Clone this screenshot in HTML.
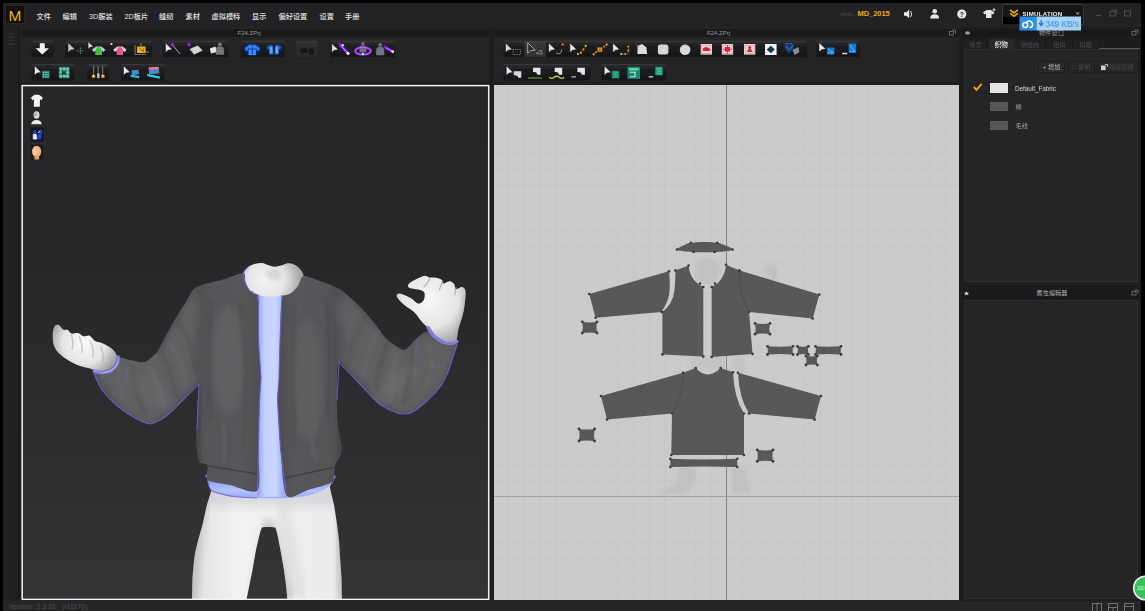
<!DOCTYPE html>
<html lang="zh">
<head>
<meta charset="utf-8">
<title>Marvelous Designer</title>
<style>
*{box-sizing:border-box;margin:0;padding:0}
html,body{width:1145px;height:611px;overflow:hidden;background:#000}
body{position:relative;font-family:"Liberation Sans","Noto Sans CJK SC",sans-serif;color:#ddd}
.abs{position:absolute}
#app{position:absolute;left:3px;top:3px;width:1138px;height:608px;background:#242426}
#menubar{position:absolute;left:3px;top:3px;width:1138px;height:23px;background:#222224}
.mi{position:absolute;top:12px;font-size:7.2px;line-height:10px;color:#e4e4e4;white-space:nowrap;font-weight:500}
#logo{position:absolute;left:5px;top:5px;width:20px;height:19px;background:#15100a;border:1px solid #2a2622}
#logo span{position:absolute;left:0;top:1.2px;width:18px;text-align:center;font-size:15.5px;line-height:18px;color:#e8b030;font-weight:400}
.phead{position:absolute;height:8px;background:#1b1b1d;border-radius:1px}
.ptitle{position:absolute;font-size:6px;line-height:8px;color:#9a9a9a;white-space:nowrap}
.vp3d{position:absolute;left:22px;top:85px;width:467px;height:515px;background:linear-gradient(#262629,#28282b 40%,#343437)}
.vp2d{position:absolute;left:494px;top:85px;width:465px;height:515px;background:#cbcbcb}
.tb{position:absolute;height:17px;background:#1c1c1e;border-top:1px solid #3a3a3c;border-radius:1px}
</style>
</head>
<body>
<div id="app"></div>
<div id="menubar"></div>
<div id="logo"><span>M</span></div>
<span class="mi" style="left:36.5px">文件</span>
<span class="mi" style="left:62.5px">编辑</span>
<span class="mi" style="left:89px">3D服装</span>
<span class="mi" style="left:124.5px">2D板片</span>
<span class="mi" style="left:159px">缝纫</span>
<span class="mi" style="left:185.5px">素材</span>
<span class="mi" style="left:211.5px">虚拟模特</span>
<span class="mi" style="left:252px">显示</span>
<span class="mi" style="left:278.5px">偏好设置</span>
<span class="mi" style="left:319.5px">设置</span>
<span class="mi" style="left:345px">手册</span>

<!-- left gutter -->
<div class="abs" style="left:3px;top:26px;width:15px;height:585px;background:#202022"></div>
<div class="abs" style="left:18px;top:26px;width:2px;height:575px;background:#1a1a1c"></div>

<div class="abs" style="left:8px;top:33px;width:7px;height:14px;background:repeating-linear-gradient(#2c2c2e 0 1.5px,#202022 1.5px 3.5px)"></div>
<div class="abs" style="left:20px;top:82px;width:940px;height:3px;background:#1e1e20"></div>
<div class="abs" style="left:489px;top:27px;width:5px;height:574px;background:#1d1d1f"></div>
<div class="abs" style="left:959px;top:27px;width:3px;height:574px;background:#1d1d1f"></div>
<!-- 3D panel header -->
<div class="phead" style="left:21px;top:29px;width:468px"></div>
<span class="ptitle" style="left:237.5px;top:29px">F24.ZPrj</span>
<!-- 2D panel header -->
<div class="phead" style="left:493px;top:29px;width:466px"></div>
<span class="ptitle" style="left:707px;top:29px">F24.ZPrj</span>

<div class="vp3d" id="vp3d"></div>
<svg class="abs" style="left:23px;top:86px" width="465" height="513" viewBox="23 86 465 513">
<defs>
<linearGradient id="gLL" gradientUnits="userSpaceOnUse" x1="192" y1="0" x2="268" y2="0">
<stop offset="0" stop-color="#a8a8a8"/><stop offset=".14" stop-color="#dedede"/><stop offset=".45" stop-color="#f3f3f3"/><stop offset=".8" stop-color="#e2e2e2"/><stop offset="1" stop-color="#b4b4b4"/></linearGradient>
<linearGradient id="gRL" gradientUnits="userSpaceOnUse" x1="262" y1="0" x2="343" y2="0">
<stop offset="0" stop-color="#9c9c9c"/><stop offset=".25" stop-color="#c9c9c9"/><stop offset=".6" stop-color="#ececec"/><stop offset=".88" stop-color="#f0f0f0"/><stop offset="1" stop-color="#bdbdbd"/></linearGradient>
<linearGradient id="gLegs" gradientUnits="userSpaceOnUse" x1="192" y1="0" x2="343" y2="0">
<stop offset="0" stop-color="#c9c9c9"/><stop offset=".08" stop-color="#e6e6e6"/><stop offset=".3" stop-color="#f2f2f2"/><stop offset=".7" stop-color="#efefef"/><stop offset=".93" stop-color="#ececec"/><stop offset="1" stop-color="#cfcfcf"/></linearGradient>
<linearGradient id="gStrip" gradientUnits="userSpaceOnUse" x1="258" y1="0" x2="283" y2="0">
<stop offset="0" stop-color="#94a2f4"/><stop offset=".25" stop-color="#c2d0ff"/><stop offset=".7" stop-color="#c9d6ff"/><stop offset="1" stop-color="#a2aff6"/></linearGradient>
<linearGradient id="gHem" gradientUnits="userSpaceOnUse" x1="0" y1="478" x2="0" y2="499">
<stop offset="0" stop-color="#8a98f0"/><stop offset=".6" stop-color="#b4c2ff"/><stop offset="1" stop-color="#98a4f2"/></linearGradient>
<radialGradient id="gNeck" gradientUnits="userSpaceOnUse" cx="266" cy="280" r="34">
<stop offset="0" stop-color="#f4f4f4"/><stop offset=".55" stop-color="#e6e6e6"/><stop offset="1" stop-color="#a9a9a9"/></radialGradient>
<radialGradient id="gHandL" gradientUnits="userSpaceOnUse" cx="84" cy="343" r="36">
<stop offset="0" stop-color="#fafafa"/><stop offset=".6" stop-color="#e4e4e4"/><stop offset="1" stop-color="#9c9c9c"/></radialGradient>
<radialGradient id="gHandR" gradientUnits="userSpaceOnUse" cx="430" cy="300" r="46">
<stop offset="0" stop-color="#f8f8f8"/><stop offset=".6" stop-color="#e6e6e6"/><stop offset="1" stop-color="#a6a6a6"/></radialGradient>
<linearGradient id="gJL" gradientUnits="userSpaceOnUse" x1="190" y1="0" x2="262" y2="0">
<stop offset="0" stop-color="#4c4c4f"/><stop offset=".25" stop-color="#555558"/><stop offset=".7" stop-color="#58585b"/><stop offset="1" stop-color="#4e4e51"/></linearGradient>
<linearGradient id="gJR" gradientUnits="userSpaceOnUse" x1="276" y1="0" x2="345" y2="0">
<stop offset="0" stop-color="#4c4c4f"/><stop offset=".3" stop-color="#58585b"/><stop offset=".75" stop-color="#555558"/><stop offset="1" stop-color="#4a4a4d"/></linearGradient>
<filter id="b2" x="-20%" y="-20%" width="140%" height="140%"><feGaussianBlur stdDeviation="2.2"/></filter>
<filter id="b4" x="-30%" y="-30%" width="160%" height="160%"><feGaussianBlur stdDeviation="4"/></filter>
<filter id="b1" x="-10%" y="-10%" width="120%" height="120%"><feGaussianBlur stdDeviation="0.6"/></filter>
<clipPath id="cJL"><path id="pJL" d="M243.5,273.0 C240.8,272.5 230.1,277.5 225.0,279.0 C219.9,280.5 209.2,282.7 205.0,284.0 C200.8,285.3 195.9,286.9 193.5,289.0 C191.1,291.1 189.6,295.7 187.0,300.0 C184.4,304.3 177.2,315.5 174.0,321.0 C170.8,326.5 165.3,336.9 163.0,341.0 C160.7,345.1 159.4,349.2 157.0,352.0 C154.6,354.8 148.6,360.9 145.0,362.0 C141.4,363.1 133.5,360.6 130.0,360.0 C126.5,359.4 120.9,356.8 118.6,357.6 C116.3,358.4 114.9,364.2 113.0,366.0 C111.1,367.8 106.6,370.2 104.0,371.0 C101.4,371.8 93.9,369.7 93.5,372.0 C93.1,374.3 98.3,384.1 100.8,388.0 C103.3,391.9 108.9,397.9 112.0,401.0 C115.1,404.1 120.7,408.6 124.0,411.0 C127.3,413.4 133.7,417.3 137.0,419.0 C140.3,420.7 145.9,423.6 149.0,423.7 C152.1,423.8 157.2,421.4 160.0,420.0 C162.8,418.6 166.7,415.9 170.0,413.0 C173.3,410.1 181.1,401.9 185.0,398.0 C188.9,394.1 197.3,383.1 199.0,384.0 C200.7,384.9 197.8,399.4 197.5,405.0 C197.2,410.6 197.2,422.3 197.0,426.0 C196.8,429.7 196.0,429.8 196.0,433.0 C196.0,436.2 196.5,446.1 197.0,450.0 C197.5,453.9 198.1,459.9 199.5,462.0 C200.9,464.1 206.5,463.1 207.6,465.5 C208.7,467.9 204.6,477.4 207.6,480.0 C210.6,482.6 223.3,483.6 230.0,485.0 C236.7,486.4 253.7,495.2 257.5,490.5 C261.3,485.8 258.2,462.1 258.5,450.0 C258.8,437.9 259.2,409.6 259.5,400.0 C259.8,390.4 261.1,386.0 261.0,378.0 C260.9,370.0 258.8,351.1 258.5,340.0 C258.2,328.9 259.6,301.5 258.5,295.0 C257.4,288.5 251.7,292.6 250.0,291.0 C248.3,289.4 246.4,285.4 245.5,283.0 C244.6,280.6 246.2,273.5 243.5,273.0Z"/></clipPath>
<clipPath id="cJR"><path id="pJR" d="M303.6,276.0 C306.5,275.3 315.3,279.3 320.0,281.0 C324.7,282.7 334.6,286.3 339.0,288.8 C343.4,291.3 349.5,296.9 353.0,300.0 C356.5,303.1 361.9,308.7 365.0,312.0 C368.1,315.3 373.2,321.5 376.0,325.0 C378.8,328.5 383.3,335.7 386.0,338.5 C388.7,341.3 393.5,344.5 396.0,346.0 C398.5,347.5 402.3,350.7 404.7,350.0 C407.1,349.3 411.6,343.3 414.0,341.0 C416.4,338.7 420.9,334.2 423.0,333.0 C425.1,331.8 427.7,331.1 430.0,332.0 C432.3,332.9 436.4,338.4 440.0,340.0 C443.6,341.6 455.3,341.5 457.0,343.8 C458.7,346.1 454.2,353.2 453.0,357.0 C451.8,360.8 449.6,368.2 448.0,372.0 C446.4,375.8 443.7,381.9 441.0,385.6 C438.3,389.3 431.8,396.5 428.0,400.0 C424.2,403.5 415.7,410.1 412.5,412.0 C409.3,413.9 406.1,413.9 404.0,414.0 C401.9,414.1 399.4,413.8 397.0,413.0 C394.6,412.2 388.8,409.6 386.0,408.0 C383.2,406.4 379.9,404.6 376.0,401.0 C372.1,397.4 361.9,386.2 357.0,381.0 C352.1,375.8 341.7,360.7 339.0,362.0 C336.3,363.3 337.2,383.3 337.0,391.0 C336.8,398.7 336.9,412.3 337.5,420.0 C338.1,427.7 341.7,443.7 341.8,449.0 C341.9,454.3 338.9,457.8 338.0,460.0 C337.1,462.2 335.6,462.8 335.0,465.5 C334.4,468.2 334.4,477.6 333.7,480.0 C333.0,482.4 333.4,482.2 330.0,483.5 C326.6,484.8 313.8,488.4 308.0,490.0 C302.2,491.6 290.2,501.0 286.5,495.5 C282.8,490.0 281.7,461.7 280.5,449.0 C279.3,436.3 277.7,409.5 277.5,400.0 C277.3,390.5 278.7,386.0 279.0,378.0 C279.3,370.0 279.6,351.1 280.0,340.0 C280.4,328.9 280.7,301.1 282.0,295.0 C283.3,288.9 287.9,295.2 290.0,294.0 C292.1,292.8 296.2,288.4 298.0,286.0 C299.8,283.6 300.7,276.7 303.6,276.0Z"/></clipPath>
</defs>
<g filter="url(#b1)">
<clipPath id="cLeg"><path id="pLeg" d="M215.0,468.0 C201.6,470.3 212.9,483.7 212.0,488.0 C211.1,492.3 208.1,500.8 207.0,505.0 C205.9,509.2 203.8,519.8 202.7,524.0 C201.6,528.2 199.0,537.1 198.0,541.0 C197.0,544.9 195.1,552.7 194.5,557.0 C193.9,561.3 192.8,573.0 192.5,578.0 C192.2,583.0 192.1,595.7 192.0,600.0 C191.9,604.3 185.6,613.2 191.8,615.0 C198.0,616.8 238.6,616.8 245.0,615.0 C251.4,613.2 246.0,603.5 246.5,600.0 C247.0,596.5 248.8,588.5 249.5,585.0 C250.2,581.5 251.7,574.1 252.5,570.0 C253.3,565.9 255.1,554.3 256.0,550.0 C256.9,545.7 259.4,535.5 260.0,533.0 C260.6,530.5 261.2,529.2 261.5,528.5 C261.8,527.8 261.7,527.5 262.5,527.3 C263.3,527.1 266.6,527.0 268.0,527.0 C269.4,527.0 273.6,527.1 274.5,527.3 C275.4,527.5 275.4,527.8 275.7,528.5 C276.0,529.2 276.4,530.5 277.0,533.0 C277.6,535.5 279.7,545.7 280.5,550.0 C281.3,554.3 283.4,565.9 284.0,570.0 C284.6,574.1 285.6,581.5 286.0,585.0 C286.4,588.5 287.2,596.5 287.5,600.0 C287.8,603.5 282.1,613.2 288.5,615.0 C294.9,616.8 336.0,616.8 342.2,615.0 C348.4,613.2 342.1,604.3 342.0,600.0 C341.9,595.7 341.7,583.0 341.5,578.0 C341.3,573.0 340.3,561.3 340.0,557.0 C339.7,552.7 339.4,544.9 339.0,541.0 C338.6,537.1 337.6,528.2 337.0,524.0 C336.4,519.8 334.8,509.2 334.0,505.0 C333.2,500.8 330.8,492.3 330.0,488.0 C329.2,483.7 340.4,470.3 327.0,468.0 C313.6,465.7 228.4,465.7 215.0,468.0Z"/></clipPath>
<use href="#pLeg" fill="url(#gLegs)"/>
<g clip-path="url(#cLeg)">
<path d="M268,522 L252,600" stroke="#b0b0b0" stroke-width="7" opacity=".45" filter="url(#b4)"/>
<path d="M268,522 L288,600" stroke="#a0a0a0" stroke-width="12" opacity=".5" filter="url(#b4)"/>
<path d="M282,505 L300,600" stroke="#c5c5c5" stroke-width="12" opacity=".35" filter="url(#b4)"/>
<path d="M205,500 L190,600" stroke="#a5a5a5" stroke-width="7" opacity=".45" filter="url(#b4)"/>
<path d="M338,500 L344,600" stroke="#9a9a9a" stroke-width="6" opacity=".5" filter="url(#b4)"/>
<rect x="190" y="484" width="160" height="22" fill="#b0b0bc" opacity=".35" filter="url(#b4)"/>
</g>
<path d="M214.0,474.0 C198.2,474.7 208.2,476.9 207.8,479.0 C207.4,481.1 209.1,488.0 211.0,490.0 C212.9,492.0 218.7,493.1 222.0,494.0 C225.3,494.9 230.4,496.3 235.5,496.8 C240.6,497.3 253.5,497.8 260.0,498.0 C266.5,498.2 279.0,498.4 284.6,498.2 C290.2,498.0 297.7,497.2 302.0,496.5 C306.3,495.8 313.7,494.1 317.0,493.0 C320.3,491.9 324.8,489.7 327.0,488.0 C329.2,486.3 333.6,482.4 333.5,480.5 C333.4,478.6 341.9,474.9 326.0,474.0 C310.1,473.1 229.8,473.3 214.0,474.0Z" fill="url(#gHem)"/>
<path d="M257.5,291.0 L282.5,291.0 L280.0,340.0 L279.0,378.0 L277.5,400.0 L280.5,449.0 L287.0,497.0 L257.0,497.0 L259.5,400.0 L261.0,378.0 L258.5,340.0Z" fill="url(#gStrip)"/>
<path d="M255.4,263.8 C257.7,263.1 259.9,262.8 262.0,263.0 C264.1,263.2 266.0,264.4 268.0,265.0 C270.0,265.6 271.8,266.7 274.0,266.8 C276.2,266.9 278.7,266.1 281.0,265.5 C283.3,264.9 285.8,263.5 288.0,263.3 C290.2,263.1 292.0,263.6 294.0,264.5 C296.0,265.4 298.4,267.1 300.0,269.0 C301.6,270.9 303.4,273.5 303.6,276.0 C303.8,278.5 302.3,281.7 301.0,284.0 C299.7,286.3 297.8,288.3 296.0,290.0 C294.2,291.7 292.5,293.0 290.0,294.0 C287.5,295.0 284.2,295.6 281.0,296.0 C277.8,296.4 274.5,296.6 271.0,296.5 C267.5,296.4 263.5,296.4 260.0,295.5 C256.5,294.6 252.4,293.1 250.0,291.0 C247.6,288.9 246.6,286.0 245.5,283.0 C244.4,280.0 243.1,275.7 243.5,273.0 C243.9,270.3 246.0,268.5 248.0,267.0 C250.0,265.5 253.1,264.5 255.4,263.8Z" fill="url(#gNeck)"/>
<ellipse cx="274" cy="274" rx="8" ry="6" fill="#c9c9c9" opacity=".6" filter="url(#b2)"/>
<use href="#pJL" fill="url(#gJL)"/>
<use href="#pJR" fill="url(#gJR)"/>
<g clip-path="url(#cJL)">
<path d="M196,286 L160,350 L118,356 L92,372 L124,413 L150,426 L196,386Z" fill="#68686b" opacity=".75" filter="url(#b4)"/>
<ellipse cx="228" cy="360" rx="16" ry="55" fill="#6a6a6d" opacity=".55" filter="url(#b4)"/>
<ellipse cx="150" cy="392" rx="30" ry="12" transform="rotate(35 150 392)" fill="#68686b" opacity=".7" filter="url(#b4)"/>
<ellipse cx="182" cy="335" rx="10" ry="40" transform="rotate(22 182 335)" fill="#626265" opacity=".6" filter="url(#b4)"/>
<path d="M200,384 L197,440 L199,462" stroke="#3e3e41" stroke-width="5" fill="none" opacity=".6" filter="url(#b2)"/>
<path d="M212.0,300.0 C211.3,310.0 208.0,340.0 208.0,360.0 C208.0,380.0 211.3,410.0 212.0,420.0" stroke="#434346" stroke-width="3" fill="none" opacity="0.45" filter="url(#b2)"/>
<path d="M240.0,300.0 C241.0,311.7 245.5,345.0 246.0,370.0 C246.5,395.0 243.5,436.7 243.0,450.0" stroke="#454548" stroke-width="3" fill="none" opacity="0.4" filter="url(#b2)"/>
<path d="M222.0,420.0 C222.7,424.2 226.0,438.0 226.0,445.0 C226.0,452.0 222.7,459.2 222.0,462.0" stroke="#737376" stroke-width="3" fill="none" opacity="0.4" filter="url(#b2)"/>
<path d="M200,464.5 L257,474" stroke="#3c3c3f" stroke-width="1.6" fill="none" opacity=".8"/>
<path d="M149.0,365.0 C150.5,368.3 155.7,377.8 158.0,385.0 C160.3,392.2 162.2,404.2 163.0,408.0" stroke="#7a7a7d" stroke-width="3" fill="none" opacity="0.5" filter="url(#b2)"/>
<path d="M160.0,352.0 C161.7,355.3 167.3,364.3 170.0,372.0 C172.7,379.7 175.0,393.7 176.0,398.0" stroke="#404043" stroke-width="2.5" fill="none" opacity="0.5" filter="url(#b2)"/>
<path d="M168.0,340.0 C170.0,343.3 177.0,352.0 180.0,360.0 C183.0,368.0 185.0,383.3 186.0,388.0" stroke="#767679" stroke-width="3" fill="none" opacity="0.45" filter="url(#b2)"/>
<path d="M132.0,366.0 C132.7,370.0 133.7,381.8 136.0,390.0 C138.3,398.2 144.3,410.8 146.0,415.0" stroke="#404043" stroke-width="2.5" fill="none" opacity="0.45" filter="url(#b2)"/>
<path d="M176.0,318.0 C178.3,322.5 186.7,336.0 190.0,345.0 C193.3,354.0 195.0,367.5 196.0,372.0" stroke="#404043" stroke-width="2.5" fill="none" opacity="0.4" filter="url(#b2)"/>
<path d="M122.0,364.0 C121.3,366.7 117.7,373.7 118.0,380.0 C118.3,386.3 123.0,398.3 124.0,402.0" stroke="#77777a" stroke-width="2.5" fill="none" opacity="0.4" filter="url(#b2)"/>
<path d="M126.0,362.0 C126.2,364.0 127.8,369.7 127.0,374.0 C126.2,378.3 123.5,384.7 121.0,388.0 C118.5,391.3 113.5,393.0 112.0,394.0" stroke="#6e6ab8" stroke-width="1" fill="none" opacity=".55"/>
</g>
<g clip-path="url(#cJR)">
<path d="M342,288 L386,336 L405,348 L423,331 L459,343 L442,388 L413,414 L396,415 L342,364Z" fill="#68686b" opacity=".75" filter="url(#b4)"/>
<ellipse cx="308" cy="380" rx="15" ry="60" fill="#68686b" opacity=".5" filter="url(#b4)"/>
<ellipse cx="395" cy="385" rx="32" ry="12" transform="rotate(-38 395 385)" fill="#6a6a6d" opacity=".7" filter="url(#b4)"/>
<ellipse cx="356" cy="330" rx="10" ry="36" transform="rotate(-35 356 330)" fill="#626265" opacity=".6" filter="url(#b4)"/>
<path d="M339,362 L338,420 L341,455" stroke="#3e3e41" stroke-width="5" fill="none" opacity=".6" filter="url(#b2)"/>
<path d="M326.0,300.0 C326.7,310.0 330.0,340.0 330.0,360.0 C330.0,380.0 326.7,410.0 326.0,420.0" stroke="#434346" stroke-width="3" fill="none" opacity="0.45" filter="url(#b2)"/>
<path d="M296.0,300.0 C295.3,311.7 292.0,345.0 292.0,370.0 C292.0,395.0 295.3,436.7 296.0,450.0" stroke="#454548" stroke-width="3" fill="none" opacity="0.4" filter="url(#b2)"/>
<path d="M316.0,420.0 C315.3,424.2 311.7,438.0 312.0,445.0 C312.3,452.0 317.0,459.2 318.0,462.0" stroke="#737376" stroke-width="3" fill="none" opacity="0.4" filter="url(#b2)"/>
<path d="M285,478 L340,466" stroke="#3c3c3f" stroke-width="1.6" fill="none" opacity=".8"/>
<path d="M398.0,352.0 C397.0,355.8 393.3,366.7 392.0,375.0 C390.7,383.3 390.3,397.5 390.0,402.0" stroke="#7a7a7d" stroke-width="3" fill="none" opacity="0.5" filter="url(#b2)"/>
<path d="M388.0,342.0 C386.7,346.0 382.0,357.7 380.0,366.0 C378.0,374.3 376.7,387.7 376.0,392.0" stroke="#404043" stroke-width="2.5" fill="none" opacity="0.5" filter="url(#b2)"/>
<path d="M378.0,330.0 C376.3,334.0 370.7,345.7 368.0,354.0 C365.3,362.3 363.0,375.7 362.0,380.0" stroke="#767679" stroke-width="3" fill="none" opacity="0.45" filter="url(#b2)"/>
<path d="M412.0,346.0 C411.7,350.3 411.3,362.7 410.0,372.0 C408.7,381.3 405.0,397.0 404.0,402.0" stroke="#404043" stroke-width="2.5" fill="none" opacity="0.45" filter="url(#b2)"/>
<path d="M366.0,316.0 C364.0,320.0 357.0,332.0 354.0,340.0 C351.0,348.0 349.0,360.0 348.0,364.0" stroke="#404043" stroke-width="2.5" fill="none" opacity="0.4" filter="url(#b2)"/>
<path d="M428.0,344.0 C428.7,347.7 432.7,358.0 432.0,366.0 C431.3,374.0 425.3,387.7 424.0,392.0" stroke="#77777a" stroke-width="2.5" fill="none" opacity="0.4" filter="url(#b2)"/>
<path d="M419.0,338.0 C418.7,340.3 415.5,347.7 417.0,352.0 C418.5,356.3 423.2,361.3 428.0,364.0 C432.8,366.7 443.0,367.3 446.0,368.0" stroke="#6e6ab8" stroke-width="1" fill="none" opacity=".55"/>
</g>
<clipPath id="cNB"><path d="M253,300 L253,288 L262,282 L280,282 L289,287 L289,300Z"/></clipPath>
<g clip-path="url(#cNB)"><path d="M257.5,291.0 L282.5,291.0 L280.0,340.0 L279.0,378.0 L277.5,400.0 L280.5,449.0 L287.0,497.0 L257.0,497.0 L259.5,400.0 L261.0,378.0 L258.5,340.0Z" fill="url(#gStrip)"/><path d="M255.4,263.8 C257.7,263.1 259.9,262.8 262.0,263.0 C264.1,263.2 266.0,264.4 268.0,265.0 C270.0,265.6 271.8,266.7 274.0,266.8 C276.2,266.9 278.7,266.1 281.0,265.5 C283.3,264.9 285.8,263.5 288.0,263.3 C290.2,263.1 292.0,263.6 294.0,264.5 C296.0,265.4 298.4,267.1 300.0,269.0 C301.6,270.9 303.4,273.5 303.6,276.0 C303.8,278.5 302.3,281.7 301.0,284.0 C299.7,286.3 297.8,288.3 296.0,290.0 C294.2,291.7 292.5,293.0 290.0,294.0 C287.5,295.0 284.2,295.6 281.0,296.0 C277.8,296.4 274.5,296.6 271.0,296.5 C267.5,296.4 263.5,296.4 260.0,295.5 C256.5,294.6 252.4,293.1 250.0,291.0 C247.6,288.9 246.6,286.0 245.5,283.0 C244.4,280.0 243.1,275.7 243.5,273.0 C243.9,270.3 246.0,268.5 248.0,267.0 C250.0,265.5 253.1,264.5 255.4,263.8Z" fill="url(#gNeck)"/></g>
<path d="M53.0,331.0 C53.4,329.0 54.1,326.6 55.1,325.6 C56.1,324.7 57.5,324.5 58.8,325.1 C60.2,325.7 61.6,328.6 63.1,329.4 C64.6,330.2 66.5,329.2 67.9,329.9 C69.3,330.6 69.9,333.1 71.6,333.6 C73.3,334.1 76.0,332.6 78.0,333.1 C79.9,333.5 81.3,335.8 83.3,336.3 C85.2,336.7 87.7,334.9 89.7,335.7 C91.6,336.5 92.9,339.8 95.0,341.1 C97.1,342.3 99.8,342.0 102.4,343.2 C105.1,344.3 108.7,346.3 111.0,348.0 C113.2,349.7 114.6,351.3 115.7,353.3 C116.9,355.2 118.0,357.6 117.9,359.7 C117.8,361.8 116.7,364.1 115.2,366.1 C113.7,368.0 111.3,370.3 108.8,371.4 C106.3,372.4 103.3,372.9 100.3,372.4 C97.3,372.0 94.1,369.8 90.7,368.7 C87.4,367.7 83.7,367.4 80.1,366.1 C76.5,364.7 72.4,362.8 68.9,360.7 C65.5,358.7 61.8,356.3 59.4,353.8 C56.9,351.3 55.2,348.6 54.0,345.9 C52.9,343.1 52.8,339.8 52.7,337.3 C52.5,334.9 52.6,332.9 53.0,331.0Z" fill="url(#gHandL)"/>
<path d="M71,334 Q74,342 72,350 M79,336 Q83,344 82,353 M90,341 Q94,348 93,357 M101,347 Q104,354 103,362" stroke="#b5b5b5" stroke-width="1.5" fill="none" opacity=".7" filter="url(#b1)"/>
<clipPath id="cRH"><path d="M396.8,296.7 C395.9,294.7 397.4,293.2 399.7,293.4 C402.1,293.7 407.7,296.4 410.8,298.1 C413.8,299.8 416.0,303.2 418.1,303.6 C420.3,304.0 422.5,302.1 423.6,300.3 C424.6,298.6 425.0,294.7 424.5,293.0 C423.9,291.3 422.5,290.8 420.3,290.0 C418.2,289.3 413.5,289.1 411.5,288.6 C409.5,288.0 408.5,287.8 408.3,286.8 C408.0,285.8 407.5,284.5 410.0,282.7 C412.6,280.9 420.4,276.9 423.6,276.0 C426.8,275.2 427.4,277.3 429.2,277.5 C431.0,277.8 432.3,277.2 434.3,277.5 C436.4,277.9 440.2,278.7 441.7,279.7 C443.2,280.7 441.8,283.2 443.2,283.4 C444.5,283.7 448.0,281.1 449.8,281.2 C451.6,281.3 453.2,282.8 454.2,284.1 C455.2,285.5 454.5,288.8 455.7,289.3 C456.9,289.8 460.0,287.0 461.6,287.1 C463.2,287.2 464.7,288.1 465.3,290.0 C465.9,292.0 465.6,294.9 465.3,298.9 C464.9,302.8 464.2,308.7 463.1,313.6 C462.0,318.5 459.9,323.7 458.6,328.3 C457.4,333.0 457.7,339.3 455.7,341.6 C453.7,343.9 450.5,343.5 446.9,342.3 C443.2,341.1 436.8,336.7 433.6,334.2 C430.4,331.8 429.6,329.6 427.7,327.6 C425.8,325.6 424.3,324.7 422.1,322.1 C419.9,319.6 417.3,315.2 414.5,312.4 C411.6,309.6 407.8,308.1 404.9,305.5 C401.9,302.9 397.6,298.7 396.8,296.7Z"/></clipPath>
<path d="M396.8,296.7 C395.9,294.7 397.4,293.2 399.7,293.4 C402.1,293.7 407.7,296.4 410.8,298.1 C413.8,299.8 416.0,303.2 418.1,303.6 C420.3,304.0 422.5,302.1 423.6,300.3 C424.6,298.6 425.0,294.7 424.5,293.0 C423.9,291.3 422.5,290.8 420.3,290.0 C418.2,289.3 413.5,289.1 411.5,288.6 C409.5,288.0 408.5,287.8 408.3,286.8 C408.0,285.8 407.5,284.5 410.0,282.7 C412.6,280.9 420.4,276.9 423.6,276.0 C426.8,275.2 427.4,277.3 429.2,277.5 C431.0,277.8 432.3,277.2 434.3,277.5 C436.4,277.9 440.2,278.7 441.7,279.7 C443.2,280.7 441.8,283.2 443.2,283.4 C444.5,283.7 448.0,281.1 449.8,281.2 C451.6,281.3 453.2,282.8 454.2,284.1 C455.2,285.5 454.5,288.8 455.7,289.3 C456.9,289.8 460.0,287.0 461.6,287.1 C463.2,287.2 464.7,288.1 465.3,290.0 C465.9,292.0 465.6,294.9 465.3,298.9 C464.9,302.8 464.2,308.7 463.1,313.6 C462.0,318.5 459.9,323.7 458.6,328.3 C457.4,333.0 457.7,339.3 455.7,341.6 C453.7,343.9 450.5,343.5 446.9,342.3 C443.2,341.1 436.8,336.7 433.6,334.2 C430.4,331.8 429.6,329.6 427.7,327.6 C425.8,325.6 424.3,324.7 422.1,322.1 C419.9,319.6 417.3,315.2 414.5,312.4 C411.6,309.6 407.8,308.1 404.9,305.5 C401.9,302.9 397.6,298.7 396.8,296.7Z" fill="url(#gHandR)"/>
<path d="M429.9,278.5 C429.4,279.4 428.0,282.0 427.0,283.4 C425.9,284.8 424.2,286.5 423.6,287.1" stroke="#a8a8a8" stroke-width="1.3" fill="none" opacity=".8" filter="url(#b1)"/>
<path d="M442.7,280.9 C442.4,281.7 441.6,284.0 441.0,285.6 C440.4,287.2 439.5,289.5 439.2,290.3" stroke="#a8a8a8" stroke-width="1.3" fill="none" opacity=".8" filter="url(#b1)"/>
<path d="M456.0,287.1 C455.9,287.8 455.6,290.2 455.4,291.5 C455.2,292.9 454.9,294.6 454.8,295.2" stroke="#a8a8a8" stroke-width="1.3" fill="none" opacity=".8" filter="url(#b1)"/>
<g clip-path="url(#cRH)"><path d="M466.0,294.5 C465.8,297.4 465.5,306.5 464.5,312.1 C463.5,317.8 461.3,323.5 460.1,328.3 C458.9,333.1 457.7,338.8 457.2,340.8" stroke="#a0a0a0" stroke-width="4" fill="none" opacity=".6" filter="url(#b2)"/></g>
<path d="M118.2,357.0 C118.0,358.2 118.2,361.8 117.0,364.0 C115.8,366.2 113.5,369.1 111.0,370.5 C108.5,371.9 104.8,372.4 102.0,372.5 C99.2,372.6 95.8,371.2 94.5,371.0" stroke="#8580d2" stroke-width="3.6" fill="none" stroke-linecap="round"/>
<path d="M118.2,357.0 C118.0,358.2 118.2,361.8 117.0,364.0 C115.8,366.2 113.5,369.1 111.0,370.5 C108.5,371.9 104.8,372.4 102.0,372.5 C99.2,372.6 95.8,371.2 94.5,371.0" stroke="#b7b4ee" stroke-width="1.3" fill="none"/>
<path d="M428.0,327.5 C429.0,328.9 431.5,333.6 434.0,336.0 C436.5,338.4 440.2,340.8 443.0,342.0 C445.8,343.2 448.7,343.6 451.0,343.5 C453.3,343.4 456.0,341.8 457.0,341.5" stroke="#8580d2" stroke-width="3.4" fill="none" stroke-linecap="round"/>
<path d="M428.0,327.5 C429.0,328.9 431.5,333.6 434.0,336.0 C436.5,338.4 440.2,340.8 443.0,342.0 C445.8,343.2 448.7,343.6 451.0,343.5 C453.3,343.4 456.0,341.8 457.0,341.5" stroke="#b7b4ee" stroke-width="1.2" fill="none"/>
<path d="M93.5,372.0 C94.7,374.7 97.7,383.2 100.8,388.0 C103.9,392.8 108.1,397.2 112.0,401.0 C115.9,404.8 119.8,408.0 124.0,411.0 C128.2,414.0 132.8,416.9 137.0,419.0 C141.2,421.1 145.2,423.5 149.0,423.7 C152.8,423.9 156.5,421.8 160.0,420.0 C163.5,418.2 165.8,416.7 170.0,413.0 C174.2,409.3 180.2,402.8 185.0,398.0 C189.8,393.2 196.7,386.3 199.0,384.0" stroke="#6a63d6" stroke-width="1.1" fill="none" opacity=".85"/>
<path d="M118.6,357.0 C117.8,358.5 116.4,363.6 114.0,366.0 C111.6,368.4 107.4,370.5 104.0,371.5 C100.6,372.5 95.2,371.9 93.5,372.0" stroke="#6a63d6" stroke-width="1.1" fill="none" opacity=".85" stroke-width="1.6"/>
<path d="M457.0,343.8 C456.3,346.0 454.5,352.3 453.0,357.0 C451.5,361.7 450.0,367.2 448.0,372.0 C446.0,376.8 444.3,380.9 441.0,385.6 C437.7,390.3 432.8,395.6 428.0,400.0 C423.2,404.4 416.5,409.7 412.5,412.0 C408.5,414.3 406.6,413.8 404.0,414.0 C401.4,414.2 400.0,414.0 397.0,413.0 C394.0,412.0 389.5,410.0 386.0,408.0 C382.5,406.0 380.8,405.5 376.0,401.0 C371.2,396.5 363.2,387.5 357.0,381.0 C350.8,374.5 342.0,365.2 339.0,362.0" stroke="#6a63d6" stroke-width="1.1" fill="none" opacity=".85"/>
<path d="M428.0,328.0 C429.3,329.7 432.7,335.4 436.0,338.0 C439.3,340.6 444.5,342.8 448.0,343.5 C451.5,344.2 455.5,342.2 457.0,342.0" stroke="#6a63d6" stroke-width="1.1" fill="none" opacity=".85" stroke-width="1.6"/>
<path d="M248.0,267.0 C247.2,268.0 243.9,270.3 243.5,273.0 C243.1,275.7 244.4,280.0 245.5,283.0 C246.6,286.0 247.9,289.0 250.0,291.0 C252.1,293.0 256.7,294.3 258.0,295.0" stroke="#6a63d6" stroke-width="1.1" fill="none" opacity=".85"/>
<path d="M258.5,295 L258.5,340 L261,378 L259.5,400 L257.5,490" stroke="#6a63d6" stroke-width="1.1" fill="none" opacity=".85"/>
<path d="M282,295 L280,340 L279,378 L277.5,400 L280.5,449 L286.5,495" stroke="#6a63d6" stroke-width="1.1" fill="none" opacity=".85" opacity=".6"/>
<path d="M207.6,480.0 C208.2,481.7 208.6,487.7 211.0,490.0 C213.4,492.3 217.9,492.9 222.0,494.0 C226.1,495.1 229.7,496.1 235.5,496.8 C241.3,497.5 253.4,497.8 257.0,498.0" stroke="#6a63d6" stroke-width="1.1" fill="none" opacity=".85" opacity=".6"/>
<path d="M199,384 L197,430" stroke="#6a63d6" stroke-width="1.1" fill="none" opacity=".85" opacity=".5"/>
<path d="M339,362 L337,400" stroke="#6a63d6" stroke-width="1.1" fill="none" opacity=".85" opacity=".5"/>
</g>
<g filter="url(#b1)">
<path d="M31,97.5 L34.5,94.8 L39,94.8 L42.8,97.5 L41.5,100.2 L40,99.3 L39.8,106.8 L33.8,106.8 L34,99.3 L32.3,100.2Z" fill="#f4f4f4"/>
<ellipse cx="36.5" cy="115" rx="3" ry="3.8" fill="#dcdcdc"/><path d="M31.2,124.3 q.3,-4.2 5.3,-4.4 q5,.2 5.3,4.4z" fill="#e8e8e8"/><ellipse cx="35.6" cy="114.5" rx="1.6" ry="2.4" fill="#9a9a9a" opacity=".6"/>
<rect x="30" y="127" width="14" height="15" fill="#17181c" stroke="#34353a" stroke-width=".6"/><path d="M33,131 L36,130 L37,137 L41,129.5 L42.5,130.5 L41,139.5 L33.5,139.5Z" fill="#1f3fd0"/><path d="M33.3,134.5 h3 v4.5 h-3z M38.2,133 l2,-2.6" stroke="#dfe6ff" stroke-width="1" fill="#dfe6ff"/>
<rect x="30" y="144" width="14" height="16.5" fill="#1c1c20" stroke="#34353a" stroke-width=".6"/><ellipse cx="36.6" cy="151.5" rx="4.6" ry="5.8" fill="#f2b47e"/><path d="M34.5,156 h4.6 v3.5 h-4.6z" fill="#e0a06c"/><ellipse cx="35" cy="151" rx="1.8" ry="3.4" fill="#ffd2a8" opacity=".8"/>
</g>
</svg>
<svg class="abs" style="left:20px;top:83px" width="472" height="520" viewBox="20 83 472 520"><rect x="22.2" y="85.6" width="466.5" height="513.8" fill="none" stroke="#f4f4f4" stroke-width="1.5"/></svg>
<div class="vp2d" id="vp2d"></div>
<svg class="abs" style="left:494px;top:85px" width="465" height="515" viewBox="494 85 465 515">
<defs>
<pattern id="grid" patternUnits="userSpaceOnUse" x="726.4" y="496" width="15.6" height="15.6">
<path d="M0.5,0 V15.6 M0,0.5 H15.6" stroke="#c6c6c6" stroke-width="1" fill="none"/></pattern>
<filter id="pb" x="-5%" y="-5%" width="110%" height="110%"><feGaussianBlur stdDeviation="0.5"/></filter>
<filter id="pb2" x="-20%" y="-20%" width="140%" height="140%"><feGaussianBlur stdDeviation="1.5"/></filter>
</defs>
<rect x="494" y="85" width="465" height="515" fill="#cbcbcb"/>
<rect x="494" y="85" width="465" height="515" fill="url(#grid)"/>
<path d="M726.5,85 V600" stroke="#868686" stroke-width="1"/>
<path d="M494,496.5 H959" stroke="#a2a2a2" stroke-width="1"/>
<g filter="url(#pb2)" opacity=".9">
<ellipse cx="707.5" cy="271" rx="12" ry="13" fill="#c0c0c0"/>
<path d="M764,268 q4,-5 9,-3 q6,2 5,8 l-2,8 l-5,2 l-2,-8 l-4,-3z" fill="#c0c0c0"/>
<path d="M690,357 h34 v12 h-34z" fill="#c0c0c0" opacity=".8"/>
<path d="M733,357 h12 v14 h-12z" fill="#c0c0c0" opacity=".6"/>
<path d="M680,467 h16 l-2,16 l-3,8 q-14,4 -32,3 q8,-6 17,-9z" fill="#c0c0c0"/>
<path d="M732,467 h13 l2,14 l5,11 q-8,2 -19,1 l-1,-12z" fill="#c0c0c0"/>
</g>
<g filter="url(#pb)">
<path d="M676.9,249.5 C676.7,248.5 681.5,246.4 683.9,245.3 C686.2,244.2 687.3,243.4 690.8,242.8 C694.3,242.2 700.3,242.0 704.7,242.0 C709.1,242.0 713.8,242.2 717.3,242.8 C720.7,243.4 723.0,244.5 725.6,245.6 C728.2,246.7 732.8,248.5 732.6,249.5 C732.3,250.5 728.8,251.0 724.2,251.4 C719.6,251.9 711.2,252.3 704.7,252.3 C698.2,252.3 689.9,251.9 685.2,251.4 C680.6,251.0 677.1,250.5 676.9,249.5Z" fill="#585858"/>
<circle cx="676.9" cy="249.5" r="1.3" fill="#3a3a3a"/><circle cx="690.8" cy="242.8" r="1.3" fill="#3a3a3a"/><circle cx="717.3" cy="242.8" r="1.3" fill="#3a3a3a"/><circle cx="732.6" cy="249.5" r="1.3" fill="#3a3a3a"/><circle cx="714.5" cy="252.0" r="1.3" fill="#3a3a3a"/><circle cx="693.6" cy="252.0" r="1.3" fill="#3a3a3a"/>
<path d="M589.2,294.0 L669.0,271.2 Q671.5,294.0 666.0,304.0 Q663.0,309.5 661.6,312.0 L595.6,317.7Z" fill="#585858"/>
<path d="M675.5,270.4 L688.6,265.6 Q690,281 703.3,287 L703.3,356.6 L662.4,354.4 L662.4,312 Q673,304 674.5,290 Q675.5,280 675.5,270.4Z" fill="#585858"/>
<path d="M711.7,287 Q724.5,281 726,264.8 L739.5,270.4 L819.4,294.6 L812.7,318.5 L749,312 L752.6,353.9 L711.7,357Z" fill="#585858"/>
<path d="M739.5,270.4 Q739,295 749,312" stroke="#4a4a4a" stroke-width="0.8" fill="none"/>
<circle cx="589.2" cy="294.0" r="1.3" fill="#3a3a3a"/><circle cx="595.6" cy="317.7" r="1.3" fill="#3a3a3a"/><circle cx="661.6" cy="312.0" r="1.3" fill="#3a3a3a"/><circle cx="669.0" cy="271.2" r="1.3" fill="#3a3a3a"/><circle cx="675.5" cy="270.4" r="1.3" fill="#3a3a3a"/><circle cx="688.6" cy="265.6" r="1.3" fill="#3a3a3a"/><circle cx="703.3" cy="287.0" r="1.3" fill="#3a3a3a"/><circle cx="703.3" cy="356.6" r="1.3" fill="#3a3a3a"/><circle cx="662.4" cy="354.4" r="1.3" fill="#3a3a3a"/><circle cx="662.4" cy="312.0" r="1.3" fill="#3a3a3a"/><circle cx="711.7" cy="287.0" r="1.3" fill="#3a3a3a"/><circle cx="726.0" cy="264.8" r="1.3" fill="#3a3a3a"/><circle cx="739.5" cy="270.4" r="1.3" fill="#3a3a3a"/><circle cx="819.4" cy="294.6" r="1.3" fill="#3a3a3a"/><circle cx="812.7" cy="318.5" r="1.3" fill="#3a3a3a"/><circle cx="749.0" cy="312.0" r="1.3" fill="#3a3a3a"/><circle cx="752.6" cy="353.9" r="1.3" fill="#3a3a3a"/><circle cx="711.7" cy="357.0" r="1.3" fill="#3a3a3a"/><circle cx="700.0" cy="283.5" r="1.3" fill="#3a3a3a"/><circle cx="715.0" cy="283.5" r="1.3" fill="#3a3a3a"/>
<path d="M582.3,321.8 Q589.6,323.0 597.0,321.8 Q595.8,327.4 597.0,333.0 Q589.6,331.8 582.3,333.0 Q583.5,327.4 582.3,321.8Z" fill="#585858"/><circle cx="582.3" cy="321.8" r="1.4" fill="#3a3a3a"/><circle cx="597.0" cy="321.8" r="1.4" fill="#3a3a3a"/><circle cx="597.0" cy="333.0" r="1.4" fill="#3a3a3a"/><circle cx="582.3" cy="333.0" r="1.4" fill="#3a3a3a"/>
<path d="M755.0,323.3 Q762.5,324.5 770.0,323.3 Q768.8,328.8 770.0,334.2 Q762.5,333.0 755.0,334.2 Q756.2,328.8 755.0,323.3Z" fill="#585858"/><circle cx="755.0" cy="323.3" r="1.4" fill="#3a3a3a"/><circle cx="770.0" cy="323.3" r="1.4" fill="#3a3a3a"/><circle cx="770.0" cy="334.2" r="1.4" fill="#3a3a3a"/><circle cx="755.0" cy="334.2" r="1.4" fill="#3a3a3a"/>
<path d="M767.5,346.3 Q780.2,347.1 793.0,346.3 Q792.2,350.4 793.0,354.5 Q780.2,353.7 767.5,354.5 Q768.3,350.4 767.5,346.3Z" fill="#585858"/><circle cx="767.5" cy="346.3" r="1.4" fill="#3a3a3a"/><circle cx="793.0" cy="346.3" r="1.4" fill="#3a3a3a"/><circle cx="793.0" cy="354.5" r="1.4" fill="#3a3a3a"/><circle cx="767.5" cy="354.5" r="1.4" fill="#3a3a3a"/>
<path d="M797.5,346.3 Q802.9,347.1 808.3,346.3 Q807.5,350.4 808.3,354.5 Q802.9,353.7 797.5,354.5 Q798.3,350.4 797.5,346.3Z" fill="#585858"/><circle cx="797.5" cy="346.3" r="1.4" fill="#3a3a3a"/><circle cx="808.3" cy="346.3" r="1.4" fill="#3a3a3a"/><circle cx="808.3" cy="354.5" r="1.4" fill="#3a3a3a"/><circle cx="797.5" cy="354.5" r="1.4" fill="#3a3a3a"/>
<path d="M815.5,346.3 Q828.2,347.1 841.0,346.3 Q840.2,350.4 841.0,354.5 Q828.2,353.7 815.5,354.5 Q816.3,350.4 815.5,346.3Z" fill="#585858"/><circle cx="815.5" cy="346.3" r="1.4" fill="#3a3a3a"/><circle cx="841.0" cy="346.3" r="1.4" fill="#3a3a3a"/><circle cx="841.0" cy="354.5" r="1.4" fill="#3a3a3a"/><circle cx="815.5" cy="354.5" r="1.4" fill="#3a3a3a"/>
<path d="M806.0,356.0 Q811.6,356.8 817.3,356.0 Q816.5,360.5 817.3,365.0 Q811.6,364.2 806.0,365.0 Q806.8,360.5 806.0,356.0Z" fill="#585858"/><circle cx="806.0" cy="356.0" r="1.4" fill="#3a3a3a"/><circle cx="817.3" cy="356.0" r="1.4" fill="#3a3a3a"/><circle cx="817.3" cy="365.0" r="1.4" fill="#3a3a3a"/><circle cx="806.0" cy="365.0" r="1.4" fill="#3a3a3a"/>
<path d="M601,396 L683,372.8 L695.8,368 Q707.5,381 720.6,368 L733,372.3 Q734,398 744,413.5 L744,455 L671.3,455 L672,413.5 L607,419.6Z" fill="#585858"/>
<path d="M683,372.8 Q682,400 672,413.5" stroke="#4a4a4a" stroke-width="0.8" fill="none"/>
<path d="M738,372.8 L821,396 L814.7,419.6 L749,413.5 Q739,398 738,372.8Z" fill="#585858"/>
<circle cx="601.0" cy="396.0" r="1.3" fill="#3a3a3a"/><circle cx="683.0" cy="372.8" r="1.3" fill="#3a3a3a"/><circle cx="695.8" cy="368.0" r="1.3" fill="#3a3a3a"/><circle cx="720.6" cy="368.0" r="1.3" fill="#3a3a3a"/><circle cx="733.0" cy="372.3" r="1.3" fill="#3a3a3a"/><circle cx="744.0" cy="413.5" r="1.3" fill="#3a3a3a"/><circle cx="744.0" cy="455.0" r="1.3" fill="#3a3a3a"/><circle cx="671.3" cy="455.0" r="1.3" fill="#3a3a3a"/><circle cx="672.0" cy="413.5" r="1.3" fill="#3a3a3a"/><circle cx="607.0" cy="419.6" r="1.3" fill="#3a3a3a"/><circle cx="738.0" cy="372.8" r="1.3" fill="#3a3a3a"/><circle cx="821.0" cy="396.0" r="1.3" fill="#3a3a3a"/><circle cx="814.7" cy="419.6" r="1.3" fill="#3a3a3a"/><circle cx="749.0" cy="413.5" r="1.3" fill="#3a3a3a"/>
<path d="M670.3,458.8 Q704,460 737.3,458.8 L737.3,467 Q704,465.8 670.3,467Z" fill="#585858"/>
<circle cx="670.3" cy="458.8" r="1.3" fill="#3a3a3a"/><circle cx="737.3" cy="458.8" r="1.3" fill="#3a3a3a"/><circle cx="737.3" cy="467.0" r="1.3" fill="#3a3a3a"/><circle cx="670.3" cy="467.0" r="1.3" fill="#3a3a3a"/>
<path d="M579.0,429.0 Q586.8,430.2 594.6,429.0 Q593.4,435.0 594.6,441.0 Q586.8,439.8 579.0,441.0 Q580.2,435.0 579.0,429.0Z" fill="#585858"/><circle cx="579.0" cy="429.0" r="1.4" fill="#3a3a3a"/><circle cx="594.6" cy="429.0" r="1.4" fill="#3a3a3a"/><circle cx="594.6" cy="441.0" r="1.4" fill="#3a3a3a"/><circle cx="579.0" cy="441.0" r="1.4" fill="#3a3a3a"/>
<path d="M757.2,449.8 Q765.1,451.0 773.0,449.8 Q771.8,455.6 773.0,461.3 Q765.1,460.1 757.2,461.3 Q758.4,455.6 757.2,449.8Z" fill="#585858"/><circle cx="757.2" cy="449.8" r="1.4" fill="#3a3a3a"/><circle cx="773.0" cy="449.8" r="1.4" fill="#3a3a3a"/><circle cx="773.0" cy="461.3" r="1.4" fill="#3a3a3a"/><circle cx="757.2" cy="461.3" r="1.4" fill="#3a3a3a"/>
</g>
</svg>
<svg class="abs" style="left:20px;top:36px" width="940" height="48" viewBox="20 36 940 48">
<defs><linearGradient id="tbg" x1="0" y1="0" x2="0" y2="1"><stop offset="0" stop-color="#303032"/><stop offset=".35" stop-color="#1d1d1f"/><stop offset="1" stop-color="#161618"/></linearGradient><filter id="ib" x="-5%" y="-10%" width="110%" height="120%"><feGaussianBlur stdDeviation="0.45"/></filter></defs>
<g filter="url(#ib)">
<rect x="31.5" y="40.7" width="21.7" height="16.5" rx="1.2" fill="url(#tbg)"/><rect x="32.0" y="40.7" width="20.7" height="1" fill="#3b3b3d" opacity=".8"/><g transform="translate(31.5,41.0)"><path d="M8.3,2.2 h5 v5 h4.2 l-6.7,6.3 l-6.7,-6.3 h4.2z" fill="#f2f2f2"/></g>
<rect x="65.0" y="40.7" width="86.8" height="16.5" rx="1.2" fill="url(#tbg)"/><rect x="65.5" y="40.7" width="85.8" height="1" fill="#3b3b3d" opacity=".8"/><g transform="translate(65.0,41.0)"><path transform="translate(3.0,1.5) scale(1.05)" d="M0,0 L0,9.5 L2.6,7.2 L6.8,6.6Z" fill="#c9c9c9" stroke="#111" stroke-width=".5"/><path d="M15.5,6.5 v7 M12,10 h7" stroke="#5b9a5b" stroke-width="1.1" stroke-dasharray="1.4,1"/></g><g transform="translate(86.7,41.0)"><path transform="translate(1.5,0.8) scale(0.75)" d="M0,0 L0,9.5 L2.6,7.2 L6.8,6.6Z" fill="#e8e8e8" stroke="#111" stroke-width=".5"/><g transform="translate(12.0,9.5) scale(1.02)"><path d="M-6.5,-1 L-2.5,-4 L2.5,-4 L6.5,-1 L5,1.5 L3,0.2 L3,4.5 L-3,4.5 L-3,0.2 L-5,1.5Z" fill="#c9bfe0"/><path d="M-3,-0.5 L-3,4.5 L3,4.5 L3,-0.5 L1.5,-3.2 L-1.5,-3.2Z" fill="#35c435"/></g></g><g transform="translate(108.4,41.0)"><circle cx="3" cy="3" r="1.1" fill="#e8e8e8"/><g transform="translate(11.5,9.5) scale(1.02)"><path d="M-6.5,-1 L-2.5,-4 L2.5,-4 L6.5,-1 L5,1.5 L3,0.2 L3,4.5 L-3,4.5 L-3,0.2 L-5,1.5Z" fill="#d6d0dc"/><path d="M-3,-0.5 L-3,4.5 L3,4.5 L3,-0.5 L1.5,-3.2 L-1.5,-3.2Z" fill="#ef4f8e"/></g></g><g transform="translate(130.1,41.0)"><path d="M5,4 v9.5 h11" stroke="#7a6b58" stroke-width="1.2" fill="none"/><rect x="7" y="5.5" width="8.5" height="6.5" fill="#f0b21c"/><path d="M9,7 l5,4 M14,7 l-2,4" stroke="#7a5200" stroke-width=".8"/><path d="M11,2 v3 M15.5,11 h3.5" stroke="#9a8a70" stroke-width="1"/></g>
<rect x="163.0" y="40.7" width="65.1" height="16.5" rx="1.2" fill="url(#tbg)"/><rect x="163.5" y="40.7" width="64.1" height="1" fill="#3b3b3d" opacity=".8"/><g transform="translate(163.0,41.0)"><path transform="translate(2.5,2.0) scale(1.00)" d="M0,0 L0,9.5 L2.6,7.2 L6.8,6.6Z" fill="#e8e8e8" stroke="#111" stroke-width=".5"/><circle cx="9.5" cy="3.8" r="1.8" fill="#8a2be2"/><path d="M10.5,5 L17,13" stroke="#b9a8c8" stroke-width=".9"/></g><g transform="translate(184.7,41.0)"><circle cx="4.3" cy="3.6" r="1.8" fill="#8a2be2"/><path d="M5,8 L13,4.5 L18,9.5 L9.5,13.5Z" fill="#d4d4d6"/><path d="M5,8 L9.5,13.5" stroke="#9a9a9a" stroke-width=".8"/></g><g transform="translate(206.4,41.0)"><path d="M3.5,7.5 L9,5.5 L10.5,11 L4.5,12.5Z" fill="#e6e6e6"/><g transform="translate(13.5,8.0) scale(1.15)"><circle cx="0" cy="-4" r="1.7" fill="#77777b"/><path d="M-3.6,5 L-3.4,-0.5 Q-3,-2 -1,-2.2 L1,-2.2 Q3,-2 3.4,-0.5 L3.6,5Z" fill="#77777b"/></g></g>
<rect x="241.3" y="40.7" width="43.4" height="16.5" rx="1.2" fill="url(#tbg)"/><rect x="241.8" y="40.7" width="42.4" height="1" fill="#3b3b3d" opacity=".8"/><g transform="translate(241.3,41.0)"><ellipse cx="11" cy="8.5" rx="9" ry="6.5" fill="#0c2a66" opacity=".7"/><g transform="translate(11.0,8.5) scale(1.20)"><path d="M-6.5,-1 L-2.5,-4 L2.5,-4 L6.5,-1 L5,1.5 L3,0.2 L3,4.5 L-3,4.5 L-3,0.2 L-5,1.5Z" fill="#2f7df0"/><path d="M-3,-0.5 L-3,4.5 L3,4.5 L3,-0.5 L1.5,-3.2 L-1.5,-3.2Z" fill="#3b8cff"/></g><path d="M11,4 v9.5 M6.5,8 h9" stroke="#0b2f86" stroke-width=".9"/></g><g transform="translate(263.0,41.0)"><path d="M3.5,6 L7,3.8 L10,4.5 L10.4,13.5 L6,13.5 L6,8 L4.6,8.6Z M18.5,6 L15,3.8 L12,4.5 L11.6,13.5 L16,13.5 L16,8 L17.4,8.6Z" fill="#1f5fd0"/><path d="M6.8,6 L9.2,5.6 L9.6,12.3 L7,12.3Z M15.2,6 L12.8,5.6 L12.4,12.3 L15,12.3Z" fill="#5fa8ff"/></g>
<rect x="296.0" y="40.7" width="21.7" height="16.5" rx="1.2" fill="url(#tbg)"/><rect x="296.5" y="40.7" width="20.7" height="1" fill="#3b3b3d" opacity=".8"/><g transform="translate(296.0,41.0)"><rect x="0" y="0" width="21.7" height="16" fill="#3a3a3c" opacity=".55"/><path d="M4,9 q3,-4 7,-1 q2,2 0,4 h-7z" fill="#121212"/><rect x="13" y="7.5" width="5" height="6" fill="#151515"/></g>
<rect x="330.3" y="40.7" width="65.1" height="16.5" rx="1.2" fill="url(#tbg)"/><rect x="330.8" y="40.7" width="64.1" height="1" fill="#3b3b3d" opacity=".8"/><g transform="translate(330.3,41.0)"><path transform="translate(1.5,2.5) scale(0.95)" d="M0,0 L0,9.5 L2.6,7.2 L6.8,6.6Z" fill="#e8e8e8" stroke="#111" stroke-width=".5"/><path d="M9.5,3.5 L18,12.5" stroke="#7a1fe0" stroke-width="3.2" stroke-linecap="round"/><path d="M10.5,4.5 L17,11.5" stroke="#c79bff" stroke-width="1"/><circle cx="17.6" cy="12.2" r="1.5" fill="#f4f0ff"/><circle cx="12.5" cy="4.2" r="1.1" fill="#f4f0ff"/></g><g transform="translate(352.0,41.0)"><g transform="translate(11.0,6.5) scale(1.00)"><circle cx="0" cy="-4" r="1.7" fill="#6f6f78"/><path d="M-3.6,5 L-3.4,-0.5 Q-3,-2 -1,-2.2 L1,-2.2 Q3,-2 3.4,-0.5 L3.6,5Z" fill="#6f6f78"/></g><ellipse cx="11" cy="10" rx="7.8" ry="3.6" fill="none" stroke="#8a2be2" stroke-width="2.4"/><ellipse cx="11" cy="10" rx="7.8" ry="3.6" fill="none" stroke="#b98cff" stroke-width=".7"/><circle cx="11" cy="13" r="1.1" fill="#fff"/></g><g transform="translate(373.7,41.0)"><g transform="translate(6.5,8.5) scale(1.15)"><circle cx="0" cy="-4" r="1.7" fill="#6f7480"/><path d="M-3.6,5 L-3.4,-0.5 Q-3,-2 -1,-2.2 L1,-2.2 Q3,-2 3.4,-0.5 L3.6,5Z" fill="#6f7480"/></g><path d="M11,6 L19,10.5" stroke="#7a1fe0" stroke-width="3" stroke-linecap="round"/><path d="M12,6.6 L18,10" stroke="#c79bff" stroke-width=".9"/><circle cx="19" cy="10.6" r="1.4" fill="#f4f0ff"/></g>
<rect x="31.5" y="64.0" width="43.4" height="16.5" rx="1.2" fill="url(#tbg)"/><rect x="32.0" y="64.0" width="42.4" height="1" fill="#3b3b3d" opacity=".8"/><g transform="translate(31.5,64.3)"><path transform="translate(3.0,1.5) scale(1.00)" d="M0,0 L0,9.5 L2.6,7.2 L6.8,6.6Z" fill="#e8e8e8" stroke="#111" stroke-width=".5"/><rect x="10.5" y="6.5" width="7.5" height="7.5" fill="#1f7a68"/><rect x="11.4" y="7.4" width="1.3" height="1.3" fill="#7ed2bd"/><rect x="11.4" y="9.6" width="1.3" height="1.3" fill="#7ed2bd"/><rect x="11.4" y="11.8" width="1.3" height="1.3" fill="#7ed2bd"/><rect x="13.6" y="7.4" width="1.3" height="1.3" fill="#7ed2bd"/><rect x="13.6" y="9.6" width="1.3" height="1.3" fill="#7ed2bd"/><rect x="13.6" y="11.8" width="1.3" height="1.3" fill="#7ed2bd"/><rect x="15.8" y="7.4" width="1.3" height="1.3" fill="#7ed2bd"/><rect x="15.8" y="9.6" width="1.3" height="1.3" fill="#7ed2bd"/><rect x="15.8" y="11.8" width="1.3" height="1.3" fill="#7ed2bd"/></g><g transform="translate(53.2,64.3)"><rect x="5.5" y="2.5" width="11.0" height="11.5" fill="#1f7a68"/><rect x="6.4" y="3.4" width="2.5" height="2.6" fill="#7ed2bd"/><rect x="6.4" y="6.9" width="2.5" height="2.6" fill="#7ed2bd"/><rect x="6.4" y="10.5" width="2.5" height="2.6" fill="#7ed2bd"/><rect x="9.8" y="3.4" width="2.5" height="2.6" fill="#7ed2bd"/><rect x="9.8" y="6.9" width="2.5" height="2.6" fill="#7ed2bd"/><rect x="9.8" y="10.5" width="2.5" height="2.6" fill="#7ed2bd"/><rect x="13.1" y="3.4" width="2.5" height="2.6" fill="#7ed2bd"/><rect x="13.1" y="6.9" width="2.5" height="2.6" fill="#7ed2bd"/><rect x="13.1" y="10.5" width="2.5" height="2.6" fill="#7ed2bd"/><rect x="8.5" y="7" width="4" height="3" fill="#0e3d34"/></g>
<rect x="87.2" y="64.0" width="21.7" height="16.5" rx="1.2" fill="url(#tbg)"/><rect x="87.7" y="64.0" width="20.7" height="1" fill="#3b3b3d" opacity=".8"/><g transform="translate(87.2,64.3)"><path d="M6.5,1.5 v9 M11,1.5 v10 M15.5,1.5 v9" stroke="#8a8a90" stroke-width=".9"/><path d="M4,1.8 h14" stroke="#55555a" stroke-width=".8" stroke-dasharray="1.5,1"/><circle cx="6.3" cy="12" r="1.9" fill="#e07a10"/><circle cx="6.3" cy="11.4" r=".9" fill="#fff2d8"/><rect x="9.8" y="9" width="2.6" height="5" rx="1" fill="#b9bcc8"/><circle cx="15.7" cy="12" r="1.9" fill="#e07a10"/><circle cx="15.7" cy="11.4" r=".9" fill="#fff2d8"/></g>
<rect x="121.0" y="64.0" width="43.4" height="16.5" rx="1.2" fill="url(#tbg)"/><rect x="121.5" y="64.0" width="42.4" height="1" fill="#3b3b3d" opacity=".8"/><g transform="translate(121.0,64.3)"><path transform="translate(2.5,1.5) scale(1.00)" d="M0,0 L0,9.5 L2.6,7.2 L6.8,6.6Z" fill="#e8e8e8" stroke="#111" stroke-width=".5"/><path d="M10.5,6 L17.5,5.5 L18,10 L11,11Z" fill="#4a88c8"/><path d="M9.5,10.5 L18.5,11.8 L18,14 L9.5,12.5Z" fill="#25c8e8"/></g><g transform="translate(142.7,64.3)"><path d="M6,3 L16,2.5 L16.5,9 L6.5,9.5Z" fill="#e07a9a"/><path d="M6,5.5 L16.3,5 L16.5,9 L6.5,9.5Z" fill="#4a88c8"/><path d="M4.5,9.5 L17.5,12.2 L17,14.5 L4.5,12Z" fill="#25c8e8"/></g>
<rect x="503.3" y="40.7" width="303.8" height="16.5" rx="1.2" fill="url(#tbg)"/><rect x="503.8" y="40.7" width="302.8" height="1" fill="#3b3b3d" opacity=".8"/><g transform="translate(502.5,41.0)"><path transform="translate(3.0,2.0) scale(1.00)" d="M0,0 L0,9.5 L2.6,7.2 L6.8,6.6Z" fill="#d8d8d8" stroke="#111" stroke-width=".5"/><rect x="10.5" y="8.5" width="7.5" height="5" fill="none" stroke="#9a9a9a" stroke-width=".9" stroke-dasharray="1,1.2"/></g><g transform="translate(524.2,41.0)"><rect x="0.3" y="0" width="21.2" height="16" fill="#48484b" opacity=".55"/><path transform="translate(3.5,1.8) scale(1.1)" d="M0,0 L0,9.5 L2.6,7.2 L6.8,6.6Z" fill="#2a2a2c" stroke="#a9a9a9" stroke-width=".9"/><path d="M12,12.5 L17,9 L18,13Z" fill="none" stroke="#8a8a8a" stroke-width=".9"/></g><g transform="translate(545.7,41.0)"><path transform="translate(3.0,2.0) scale(1.00)" d="M0,0 L0,9.5 L2.6,7.2 L6.8,6.6Z" fill="#e8e8e8" stroke="#111" stroke-width=".5"/><path d="M10.5,12 q5,2.5 5.5,-3.5" stroke="#8d8d92" stroke-width="1.1" fill="none"/><circle cx="17" cy="3.5" r="1.1" fill="#f0a020"/></g><g transform="translate(567.4,41.0)"><path transform="translate(2.5,2.0) scale(1.00)" d="M0,0 L0,9.5 L2.6,7.2 L6.8,6.6Z" fill="#e8e8e8" stroke="#111" stroke-width=".5"/><path d="M11,13 L18.5,5.5" stroke="#6a5a40" stroke-width=".7"/><circle cx="10.6" cy="13" r="1.1" fill="#f0c040"/><circle cx="13.6" cy="11.8" r="1.1" fill="#f0a020"/><circle cx="16" cy="8.5" r="1.1" fill="#f0a020"/><circle cx="18.3" cy="4.8" r="1.1" fill="#f0c040"/></g><g transform="translate(588.9,41.0)"><path d="M4.5,13.5 L18,3.5" stroke="#7a5a20" stroke-width=".7"/><rect x="8.6" y="6.3" width="4.6" height="4.6" fill="#f0a81c" stroke="#7a4a00" stroke-width=".6"/><rect x="10" y="7.7" width="1.8" height="1.8" fill="#7a4a00"/><circle cx="4.8" cy="13.3" r="1.1" fill="#f0c040"/><circle cx="7" cy="11.2" r=".9" fill="#f0a020"/><circle cx="15.3" cy="5.6" r=".9" fill="#f0a020"/><circle cx="17.8" cy="3.6" r="1.1" fill="#f0c040"/></g><g transform="translate(610.3,41.0)"><path transform="translate(2.5,2.0) scale(1.00)" d="M0,0 L0,9.5 L2.6,7.2 L6.8,6.6Z" fill="#e8e8e8" stroke="#111" stroke-width=".5"/><path d="M11,13 h7 v-7" stroke="#7a5a30" stroke-width=".8" fill="none"/><circle cx="11" cy="13" r="1.1" fill="#f0c888"/><circle cx="15" cy="13" r="1" fill="#f0a020"/><circle cx="18" cy="9.5" r="1" fill="#f0a020"/><circle cx="18" cy="5.5" r="1" fill="#f0a020"/></g><g transform="translate(631.0,41.0)"><path d="M6.5,5 L11,3 L15.5,6.5 L16,13 L6.5,13Z" fill="#dcdcdc"/><path d="M5.5,3.5 l2.5,2.5" stroke="#8a8a8a" stroke-width=".8"/></g><g transform="translate(652.4,41.0)"><rect x="5.5" y="3.5" width="10.5" height="10" rx="2.5" fill="#d6d6d6"/></g><g transform="translate(674.1,41.0)"><circle cx="11" cy="8.7" r="5.3" fill="#dadada"/><path d="M11,2.5 v2.5" stroke="#9a9a9a" stroke-width=".9"/></g><g transform="translate(695.4,41.0)"><rect x="5.3" y="3" width="11.3" height="10.6" fill="#f1dcdf"/><rect x="6.5" y="4.2" width="8.9" height="8.2" fill="none" stroke="#d98a94" stroke-width=".7"/><path d="M7.5,7.5 q3.5,-3 7,0 v2.5 h-7z" fill="#d0283c"/></g><g transform="translate(716.5,41.0)"><rect x="5.3" y="3" width="11.3" height="10.6" fill="#f1dcdf"/><rect x="6.5" y="4.2" width="8.9" height="8.2" fill="none" stroke="#d98a94" stroke-width=".7"/><rect x="8.3" y="6" width="5.3" height="4.6" fill="#d0283c"/><path d="M11,4 v9 M6.5,8.3 h9" stroke="#d0283c" stroke-width=".8"/></g><g transform="translate(738.7,41.0)"><rect x="5.3" y="3" width="11.3" height="10.6" fill="#f1dcdf"/><rect x="6.5" y="4.2" width="8.9" height="8.2" fill="none" stroke="#d98a94" stroke-width=".7"/><path d="M8,11 q3,-7 6,0z" fill="#d0283c"/><circle cx="11" cy="6.5" r="1.6" fill="#d0283c"/></g><g transform="translate(760.0,41.0)"><rect x="5" y="3" width="11.6" height="11" fill="#eef2f4"/><path d="M10.8,4.8 L14.8,8.5 L10.8,12.2 L6.8,8.5Z" fill="#0c3a4a"/></g><g transform="translate(781.4,41.0)"><path d="M3.5,3 h8 l1,4 l-5,5.5 l-4.5,-5z" fill="#163e78"/><path d="M4.5,5 l3.5,4 l4,-5" stroke="#3d78c8" stroke-width="1" fill="none"/><path d="M4,2.5 h8" stroke="#3d78c8" stroke-width=".9" stroke-dasharray="1.5,1"/><path d="M11,9 l6,-3 l1,5 l-4.5,3z" fill="#8a8d94"/></g>
<rect x="816.5" y="40.7" width="43.4" height="16.5" rx="1.2" fill="url(#tbg)"/><rect x="817.0" y="40.7" width="42.4" height="1" fill="#3b3b3d" opacity=".8"/><g transform="translate(816.5,41.0)"><path transform="translate(2.5,1.5) scale(1.00)" d="M0,0 L0,9.5 L2.6,7.2 L6.8,6.6Z" fill="#e8e8e8" stroke="#111" stroke-width=".5"/><rect x="10.5" y="6.5" width="7.5" height="7.0" fill="#167ad2"/><path d="M11.5,7.7 l5.0,4.0 M11.5,11.9 h5.5" stroke="#7cc0ff" stroke-width=".8"/></g><g transform="translate(838.2,41.0)"><path d="M4,12.5 h5" stroke="#e8e8e8" stroke-width="1.4"/><rect x="10.5" y="2.5" width="7.5" height="9.5" fill="#167ad2"/><path d="M11.5,3.7 l5.0,6.5 M11.5,10.4 h5.5" stroke="#7cc0ff" stroke-width=".8"/></g>
<rect x="503.3" y="64.0" width="86.8" height="16.5" rx="1.2" fill="url(#tbg)"/><rect x="503.8" y="64.0" width="85.8" height="1" fill="#3b3b3d" opacity=".8"/><g transform="translate(503.3,64.3)"><path transform="translate(3.0,1.5) scale(1.00)" d="M0,0 L0,9.5 L2.6,7.2 L6.8,6.6Z" fill="#e8e8e8" stroke="#111" stroke-width=".5"/><path d="M10.5,7 h7.5 v6.5 h-3 q-.3,-2.3 -2.8,-2.6 h-1.7z" fill="#d8d8da"/></g><g transform="translate(525.0,64.3)"><path d="M8.0,3.5 h7.5 v7 h-3.2 q-.2,-2.6 -3,-2.8 h-1.3z" fill="#e4e4e6"/><path d="M3.5,11.5 l4,-2.2 l3,1.4" stroke="#111" stroke-width="1.2" fill="none"/><path d="M3,13.7 h14" stroke="#5a9a3a" stroke-width="1.2"/></g><g transform="translate(546.7,64.3)"><path d="M8.0,3.5 h7.5 v7 h-3.2 q-.2,-2.6 -3,-2.8 h-1.3z" fill="#e4e4e6"/><path d="M3.5,11 l4,-2 l3,1.2" stroke="#111" stroke-width="1.2" fill="none"/><path d="M2.5,13 q2.5,2.2 5,0 t5,0 t5,0" stroke="#b4d838" stroke-width="1.3" fill="none"/></g><g transform="translate(568.4,64.3)"><path d="M9.0,3.5 h7.5 v7 h-3.2 q-.2,-2.6 -3,-2.8 h-1.3z" fill="#e4e4e6"/><path d="M3,12.5 h4.5" stroke="#9a9a9e" stroke-width="1.6"/></g>
<rect x="601.3" y="64.0" width="65.1" height="16.5" rx="1.2" fill="url(#tbg)"/><rect x="601.8" y="64.0" width="64.1" height="1" fill="#3b3b3d" opacity=".8"/><g transform="translate(601.3,64.3)"><path transform="translate(3.0,1.5) scale(1.00)" d="M0,0 L0,9.5 L2.6,7.2 L6.8,6.6Z" fill="#e8e8e8" stroke="#111" stroke-width=".5"/><rect x="10.5" y="6.5" width="7.5" height="7.5" fill="#1f8a70"/><path d="M12,8 h4.5 M12,10.2 h4.5 M12,12.4 h4.5" stroke="#4fc2a4" stroke-width=".8"/></g><g transform="translate(623.0,64.3)"><rect x="4.5" y="2.5" width="12.5" height="12" fill="#1f8a70"/><rect x="6" y="4" width="9.5" height="2" fill="#6fd8bc"/><path d="M7,8 h5 v4.5 h-5" stroke="#b8f0e0" stroke-width="1.1" fill="none"/></g><g transform="translate(644.7,64.3)"><path d="M4,12.5 h4.5" stroke="#c8c8c8" stroke-width="1.4"/><rect x="10.5" y="2.5" width="7.5" height="8.5" fill="#1f9a7c"/><path d="M12,4.5 h4.5 M12,6.8 h4.5 M12,9 h4.5" stroke="#6fe0c0" stroke-width=".8"/></g>
</g></svg>


<!-- status bar -->
<div class="abs" style="left:3px;top:600px;width:1138px;height:11px;background:#252527"></div>
<span class="abs" style="left:9px;top:601.5px;font-size:6.8px;line-height:9px;color:#505052;letter-spacing:.1px">Version: 2.3.32 &nbsp;&nbsp;(r11170)</span>
<span class="abs" style="left:840px;top:10px;font-size:6px;line-height:8px;color:#4a4a4a">Hello,</span>
<span class="abs" style="left:857.5px;top:9px;font-size:7.6px;line-height:10px;color:#f0a818;font-weight:700;letter-spacing:-.1px">MD_2015</span>
<svg class="abs" style="left:900px;top:4px" width="245" height="28" viewBox="900 4 245 28">
<defs><filter id="rb" x="-5%" y="-10%" width="110%" height="120%"><feGaussianBlur stdDeviation="0.4"/></filter></defs><g filter="url(#rb)">
<path d="M904,12.3 h2.2 l3,-2.6 v8.6 l-3,-2.6 h-2.2z" fill="#e6e6e6"/><path d="M910.6,11 q2,3 0,6" stroke="#e6e6e6" stroke-width="1" fill="none"/>
<circle cx="934.7" cy="11.3" r="2.3" fill="#e6e6e6"/><path d="M930.3,18.4 q0,-4.2 4.4,-4.2 q4.4,0 4.4,4.2z" fill="#e6e6e6"/>
<circle cx="961.8" cy="14" r="4.6" fill="#e6e6e6"/><text x="961.8" y="16.6" font-size="7" font-weight="700" text-anchor="middle" fill="#222" font-family="Liberation Sans,sans-serif">?</text>
<path d="M983,12.5 L986.5,10 L991,10 L994.5,12.5 L993,14.6 L991.5,13.6 L991.5,18 L986,18 L986,13.6 L984.5,14.6Z" fill="#e6e6e6"/><path d="M994,8.3 v3 M992.5,9.8 h3" stroke="#e6e6e6" stroke-width=".9"/>
<rect x="1002.5" y="4.5" width="81" height="20" rx="1.5" fill="#161617" stroke="#39393b" stroke-width="1"/>
<rect x="1003" y="17" width="17" height="7.5" fill="#050505"/>
<path d="M1010.2,10 l3.8,3 l3.8,-3 M1010.2,13.3 l3.8,3 l3.8,-3" stroke="#f0a818" stroke-width="1.6" fill="none"/>
<text x="1022.5" y="16.3" font-size="6.1" font-weight="700" fill="#f2f2f2" letter-spacing=".25" font-family="Liberation Sans,sans-serif">SIMULATION</text>
<path d="M1075.5,12.5 h4.4 l-2.2,2.8z" fill="#8a8a8a"/>
<path d="M1096,15.5 h5" stroke="#4e4e50" stroke-width="1"/><rect x="1110" y="11.5" width="5.5" height="4.5" fill="none" stroke="#4e4e50" stroke-width="1"/><path d="M1111.5,10 h5.5 v4" stroke="#4e4e50" stroke-width=".8" fill="none"/><rect x="1124.5" y="11" width="6" height="5" fill="none" stroke="#4e4e50" stroke-width="1"/>
</g></svg>
<div class="abs" style="left:959px;top:27px;width:182px;height:574px;background:#1d1d1f"></div>
<div class="abs" style="left:964px;top:49px;width:174px;height:233px;background:#252528;border:1px solid #2e2e31"></div>
<div class="abs" style="left:964px;top:300px;width:174px;height:299px;background:#252528;border:1px solid #2e2e31"></div>
<div class="phead" style="left:963px;top:28.5px;width:177px;background:#19191b"></div>
<span class="ptitle" style="left:1039px;top:29px;letter-spacing:.3px">物件窗口</span>
<svg class="abs" style="left:940px;top:27px" width="205" height="12" viewBox="940 27 205 12"><g stroke="#77777a" stroke-width=".8" fill="none"><rect x="949.5" y="31.5" width="4" height="3.5"/><path d="M952,30 h3.5 v3.5"/><rect x="1132" y="31.5" width="4" height="3.5"/><path d="M1134.5,30 h3.5 v3.5"/><rect x="478.5" y="31.5" width="4" height="3.5"/></g><ellipse cx="967.5" cy="33" rx="2.6" ry="1.7" fill="#9a9a9d"/></svg>
<div class="abs" style="left:963px;top:39px;width:136px;height:10px;background:#1d1d1f"></div>
<div class="abs" style="left:965.0px;top:39.5px;width:22.0px;height:9.5px;background:#202022;border-right:1px solid #19191b;text-align:center;font-size:6.2px;line-height:9.5px;color:#4c4c4f">场景</div>
<div class="abs" style="left:988.5px;top:39px;width:25.5px;height:11px;background:#29292b;text-align:center;font-size:6.6px;line-height:11px;color:#ededed;font-weight:500">织物</div>
<div class="abs" style="left:1015.0px;top:39.5px;width:31.0px;height:9.5px;background:#202022;border-right:1px solid #19191b;text-align:center;font-size:6.2px;line-height:9.5px;color:#4c4c4f">明缝线</div>
<div class="abs" style="left:1047.0px;top:39.5px;width:26.0px;height:9.5px;background:#202022;border-right:1px solid #19191b;text-align:center;font-size:6.2px;line-height:9.5px;color:#4c4c4f">纽扣</div>
<div class="abs" style="left:1074.0px;top:39.5px;width:24.5px;height:9.5px;background:#202022;border-right:1px solid #19191b;text-align:center;font-size:6.2px;line-height:9.5px;color:#4c4c4f">扣眼</div>
<div class="abs" style="left:1099px;top:48px;width:41px;height:1px;background:#5a5a5d"></div>
<div class="abs" style="left:1038px;top:61px;width:27px;height:12px;background:#2a2a2c;border:1px solid #1c1c1e;border-radius:1px;font-size:6.2px;line-height:10px;color:#bdbdbd;text-align:center">+ 增加</div>
<div class="abs" style="left:1068px;top:61px;width:27px;height:12px;background:#262628;border:1px solid #1e1e20;border-radius:1px;font-size:6.2px;line-height:10px;color:#47474a;text-align:center">□ 复制</div>
<div class="abs" style="left:1097px;top:61px;width:41px;height:12px;background:#262628;border:1px solid #1e1e20;border-radius:1px;font-size:6.2px;line-height:10px;color:#47474a;text-align:left;padding-left:11px">指定应用</div>
<svg class="abs" style="left:1100px;top:62px" width="9" height="10" viewBox="0 0 9 10"><rect x="1" y="3.5" width="4.6" height="4.6" fill="#d0d0d0"/><path d="M5,2.5 h2.5 v2.5" stroke="#d0d0d0" stroke-width=".9" fill="none"/></svg>
<svg class="abs" style="left:972px;top:82px" width="12" height="10" viewBox="0 0 12 10"><path d="M1.8,5 L4.6,7.8 L9.6,1.8" stroke="#f0a818" stroke-width="1.8" fill="none"/></svg>
<div class="abs" style="left:990px;top:83px;width:18px;height:9.5px;background:#e6e6e6"></div>
<span class="abs" style="left:1015px;top:83.5px;font-size:6.4px;line-height:9px;color:#d6d6d6;letter-spacing:-.05px">Default_Fabric</span>
<div class="abs" style="left:990px;top:101.5px;width:18px;height:9.5px;background:#57575a"></div>
<span class="abs" style="left:1015.5px;top:101.5px;font-size:6.2px;line-height:9px;color:#a8a8a8">棉</span>
<div class="abs" style="left:990px;top:120.5px;width:18px;height:9.5px;background:#57575a"></div>
<span class="abs" style="left:1015.5px;top:120.5px;font-size:6.2px;line-height:9px;color:#a8a8a8">毛线</span>
<div class="phead" style="left:963px;top:289px;width:177px;height:9.5px;background:#19191b"></div>
<span class="ptitle" style="left:1036.5px;top:289px;color:#b4b4b4;letter-spacing:.2px">属性编辑器</span>
<svg class="abs" style="left:960px;top:287px" width="185" height="12" viewBox="960 287 185 12"><g stroke="#77777a" stroke-width=".8" fill="none"><rect x="1132" y="291.5" width="4" height="3.5"/><path d="M1134.5,290 h3.5 v3.5"/></g><path d="M966.5,291.3 l1,1.4 h1.6 l-1.2,1.2 l.5,1.7 l-1.9,-1 l-1.9,1 l.5,-1.7 l-1.2,-1.2 h1.6z" fill="#c8c8c8"/></svg>
<svg class="abs" style="left:1120px;top:570px" width="25" height="41" viewBox="1120 570 25 41"><circle cx="1145.5" cy="588" r="12.6" fill="#e9f7ec"/><circle cx="1145.5" cy="588" r="11" fill="#34c458"/><text x="1137" y="590" font-size="4.5" fill="#d8ffe0" font-family="Liberation Sans,sans-serif">100</text><g stroke="#6a6a6d" stroke-width="1" fill="none"><rect x="1092.5" y="604.5" width="9" height="7"/></g></svg>
<svg class="abs" style="left:1088px;top:601px" width="52" height="10" viewBox="1088 601 52 10"><g stroke="#737376" stroke-width="1" fill="none"><rect x="1092.500" y="603.5" width="9" height="8"/><path d="M1097,603.500 v8"/><rect x="1108.500" y="603.5" width="9" height="8"/><path d="M1108.500,607.500 h9 M1113,607.500 v4"/><rect x="1124.500" y="603.5" width="9" height="8"/><path d="M1124.500,606.500 h9"/></g></svg>
<svg class="abs" style="left:1015px;top:14px" width="70" height="20" viewBox="1015 14 70 20"><g filter="url(#rb)">
<rect x="1019.5" y="16.5" width="17" height="14" fill="#2b8fe6"/><rect x="1036.5" y="16.5" width="44.5" height="14" fill="#a7d3f6"/>
<circle cx="1025.3" cy="25" r="2.4" fill="none" stroke="#fff" stroke-width="1.5"/><path d="M1026.3,22.8 q2.2,-3 5,-1 q2.4,2 .8,4.8 q-1,1 -2.6,.9" fill="none" stroke="#fff" stroke-width="1.5"/>
<path d="M1041.2,20 v5 M1039,23 l2.2,2.6 l2.2,-2.6" stroke="#1c74d8" stroke-width="1.3" fill="none"/>
<text x="1045.5" y="26.6" font-size="8.2" fill="#3a86dc" font-family="Liberation Sans,sans-serif">349 KB/s</text>
</g></svg>
</body>
</html>
